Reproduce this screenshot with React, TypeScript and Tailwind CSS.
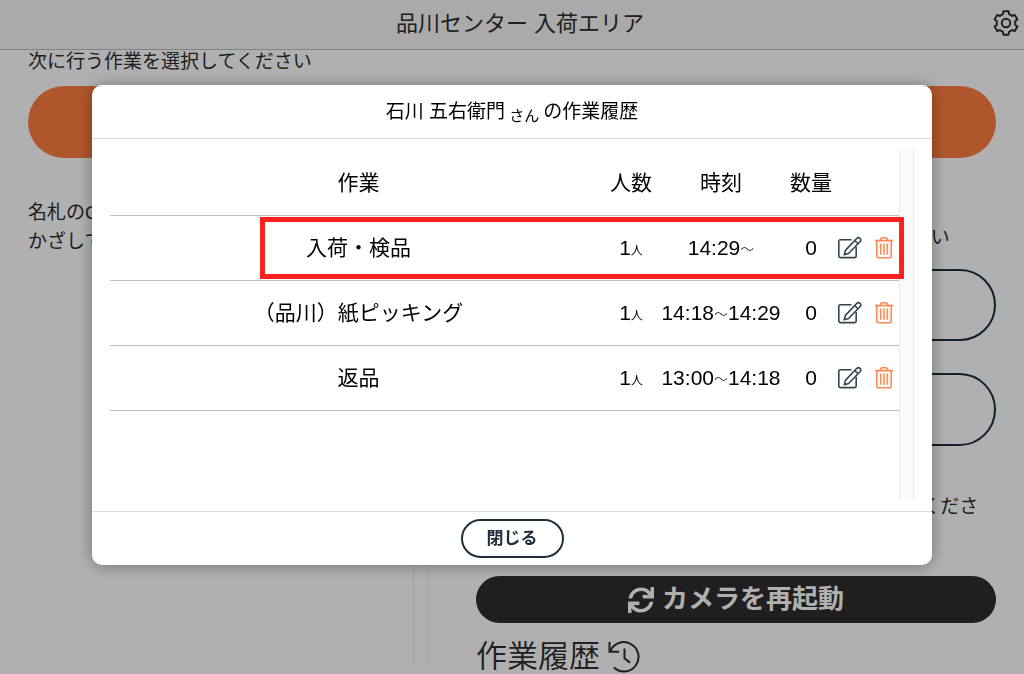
import { FaSync } from "react-icons/fa";

interface WorkRecord {
  id: number;
  name: string;
  people: number;
  start: string;
  end?: string;
  quantity: number;
}

const records: WorkRecord[] = [
  { id: 1, name: "入荷・検品", people: 1, start: "14:29", quantity: 0 },
  { id: 2, name: "（品川）紙ピッキング", people: 1, start: "14:18", end: "14:29", quantity: 0 },
  { id: 3, name: "返品", people: 1, start: "13:00", end: "14:18", quantity: 0 },
];

function GearIcon() {
  return (
    <svg viewBox="0 0 26 26" className="size-[26px]" fill="none" stroke="currentColor" strokeWidth="1.9" strokeLinejoin="round">
      <path d="M10 4.2 10.4 1.3H15.6L16 4.2Q17.8 4.9 19.1 6L21.8 4.9 24.4 9.4 22.1 11.2Q22.4 13 22.1 14.8L24.4 16.6 21.8 21.1 19.1 20Q17.8 21.1 16 21.8L15.6 24.7H10.4L10 21.8Q8.2 21.1 6.9 20L4.2 21.1 1.6 16.6 3.9 14.8Q3.6 13 3.9 11.2L1.6 9.4 4.2 4.9 6.9 6Q8.2 4.9 10 4.2Z" />
      <circle cx="13" cy="13" r="4.2" />
    </svg>
  );
}

function EditIcon() {
  return (
    <svg viewBox="0 0 24 24" className="size-6" fill="none" stroke="currentColor" strokeWidth="1.6" strokeLinejoin="round">
      <path d="M13.5 3.7H2.4Q.8 3.7.8 5.3V20Q.8 21.6 2.4 21.6H16.6Q18.2 21.6 18.2 20V11" />
      <path d="M6.3 18.8 7.4 14.4 18.9 2.3Q20.4.9 22 2.3 23.6 3.9 22.2 5.5L10.6 17.5Z" />
      <path d="M16.8 4.5 20 7.7" />
    </svg>
  );
}

function TrashIcon() {
  return (
    <svg viewBox="0 0 20 24" className="h-6 w-5" fill="none" stroke="currentColor" strokeWidth="1.6" strokeLinejoin="round">
      <path d="M1 4.6H19M6.3 4.4Q6.6 1.8 8.2 1.8H11.8Q13.4 1.8 13.7 4.4" />
      <path d="M2.8 4.8V20.2Q2.8 21.7 4.3 21.7H15.7Q17.2 21.7 17.2 20.2V4.8" />
      <path d="M6.7 7.5V18.7M10 7.5V18.7M13.3 7.5V18.7" />
    </svg>
  );
}

function HistoryIcon() {
  return (
    <svg viewBox="0 0 32 32" className="size-8" fill="none" stroke="currentColor" strokeWidth="2">
      <path d="M1.5 1V10.7H11.2" />
      <path d="M2.2 10.4A14.7 14.7 0 1 1 5.8 26.6" />
      <path d="M16.5 7.5V17.2L22 21.6" />
    </svg>
  );
}

function ScrollTrack() {
  return <div className="w-[15px] shrink-0 border-x border-[#e8e8e8] bg-[#fafafa]" />;
}

function Station() {
  return (
    <div className="h-screen overflow-hidden bg-white text-[19px] leading-[29px] text-[#2d2d2d]">
      <header className="relative flex h-[50px] items-center justify-center border-b border-[#bdbdbd] bg-[#f6f6f6] pb-0.5 pl-4">
        <h1 className="text-[22px]">品川センター 入荷エリア</h1>
        <button type="button" aria-label="設定" className="absolute top-[10px] right-[5px]">
          <GearIcon />
        </button>
      </header>

      <main className="px-7">
        <p className="leading-6">次に行う作業を選択してください</p>
        <button type="button" aria-label="作業を選択" className="mt-3 block h-[72px] w-full rounded-full bg-[#ff7d40]" />

        <div className="mt-10 grid grid-cols-[10fr_13fr] items-start gap-12">
          <section className="flex h-[calc(100vh-204px)]">
            <p className="flex-1">
              名札のQRコードを
              <br />
              かざしてください
            </p>
            <div className="w-[15px] shrink-0 border-x border-[#ececec]" />
          </section>

          <section className="pt-[25px]">
            <p className="whitespace-nowrap">名札がない場合は、次のボタンから作業をしてください</p>
            <button type="button" aria-label="名前で選択" className="mt-[17px] block h-[72px] w-full rounded-full border-2 border-[#1f2d3d]" />
            <button type="button" aria-label="番号で選択" className="mt-8 block h-[73px] w-full rounded-full border-2 border-[#1f2d3d]" />
            <p className="mt-[46px]">QRコードが読み取れない場合、カメラを再起動してください</p>
            <button
              type="button"
              className="mt-[26px] flex h-[47px] w-full items-center justify-center gap-2 rounded-full bg-[#2d2d2d] text-[26px] font-bold text-white"
            >
              <FaSync className="size-[26px]" />
              カメラを再起動
            </button>
            <h2 className="mt-[14px] flex items-center gap-2 text-[31px] leading-10 font-[350]">
              作業履歴
              <HistoryIcon />
            </h2>
          </section>
        </div>
      </main>
    </div>
  );
}

function HistoryTable() {
  return (
    <table className="w-full table-fixed border-collapse text-center text-[21px] leading-8">
      <colgroup>
        <col />
        <col className="w-12" />
        <col className="w-[132px]" />
        <col className="w-12" />
        <col className="w-8" />
        <col className="w-8" />
      </colgroup>
      <thead>
        <tr className="h-16 border-b border-[#bfbfbf]">
          <th className="p-0 font-normal">作業</th>
          <th className="p-0 font-normal whitespace-nowrap">人数</th>
          <th className="p-0 font-normal">時刻</th>
          <th className="p-0 font-normal whitespace-nowrap">数量</th>
          <td colSpan={2} />
        </tr>
      </thead>
      <tbody>
        {records.map((record) => (
          <tr key={record.id} className="h-[65px] border-b border-[#bfbfbf]">
            <td>{record.name}</td>
            <td className="whitespace-nowrap">
              {record.people}
              <span className="text-xs">人</span>
            </td>
            <td className="whitespace-nowrap">
              {record.start}
              <span className="align-middle text-sm leading-none font-light">〜</span>
              {record.end}
            </td>
            <td>{record.quantity}</td>
            <td>
              <button type="button" aria-label="編集" className="flex w-full pl-[3px] text-[#364452]">
                <EditIcon />
              </button>
            </td>
            <td>
              <button type="button" aria-label="削除" className="flex w-full justify-end pr-[5px] text-[#ff8a55]">
                <TrashIcon />
              </button>
            </td>
          </tr>
        ))}
      </tbody>
    </table>
  );
}

export default function App() {
  return (
    <div className="font-['Liberation_Sans','Noto_Sans_CJK_JP',sans-serif]">
      <Station />

      <div className="fixed inset-0 flex items-start justify-center bg-black/31 px-6 pt-[85px]">
        <div
          role="dialog"
          aria-labelledby="history-title"
          className="w-full max-w-[840px] rounded-[10px] bg-white text-black shadow-[0_1px_16px_rgba(0,0,0,0.35)]"
        >
          <h2 id="history-title" className="flex h-[54px] items-center justify-center border-b border-[#dcdcdc] pt-0.5 text-[19px]">
            <span>石川 五右衛門</span>
            <span className="mx-1 pt-2 text-[15px]">さん</span>
            <span>の作業履歴</span>
          </h2>

          <div className="px-[18px] py-3">
            <div className="relative flex h-[348px]">
              <div className="min-w-0 flex-1">
                <HistoryTable />
              </div>
              <ScrollTrack />
              {/* marks the record in progress */}
              <div className="pointer-events-none absolute top-[66px] right-[10px] left-[150px] h-[62px] border-[5px] border-[#ff2020]" />
            </div>
          </div>

          <div className="flex h-[54px] items-center justify-center border-t border-[#dcdcdc]">
            <button
              type="button"
              className="h-[39px] rounded-full border-2 border-[#212e3c] px-6 text-[17px] font-bold text-[#212e3c]"
            >
              閉じる
            </button>
          </div>
        </div>
      </div>
    </div>
  );
}
